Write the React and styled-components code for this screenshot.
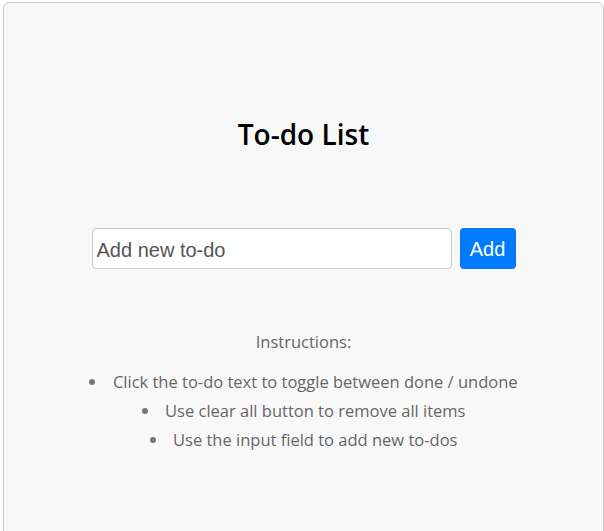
import styled, { createGlobalStyle } from "styled-components";

const GlobalStyle = createGlobalStyle`
  body {
    margin: 0;
    background: #fff;
    font-family: "Open Sans", sans-serif;
  }
`;

const Card = styled.div`
  box-sizing: border-box;
  margin: 2px 0 0 3px;
  width: 601px;
  min-height: 600px;
  padding-top: 112px;
  background-color: #f8f8f8;
  border: 1px solid #cccccc;
  border-radius: 6px;
  text-align: center;
`;

const Title = styled.h1`
  margin: 0;
  font-size: 28px;
  line-height: 38px;
  font-weight: 550;
  color: #000;
`;

const AddRow = styled.form`
  display: flex;
  justify-content: center;
  gap: 8px;
  margin-top: 75px;
`;

const TodoInput = styled.input`
  box-sizing: border-box;
  width: 360px;
  height: 41px;
  padding: 3px 4px 0;
  border: 1px solid #cccccc;
  border-radius: 4px;
  background: #fff;
  font-family: "Liberation Sans", Arial, sans-serif;
  font-size: 20px;
  color: #333;
  outline: none;

  &::placeholder {
    color: #555;
  }
`;

const AddBtn = styled.button`
  box-sizing: border-box;
  width: 56px;
  height: 41px;
  padding: 2px 0 0;
  border: none;
  border-radius: 4px;
  background-color: #007bff;
  color: #fff;
  font-family: "Liberation Sans", Arial, sans-serif;
  font-size: 20px;
  cursor: pointer;
`;

const Instructions = styled.div`
  margin-top: 62px;
  color: #666;
  font-size: 16.5px;
`;

const InstructionsHead = styled.p`
  margin: 0;
  line-height: 22px;
`;

const Steps = styled.ul`
  margin: 14px 0 0;
  padding: 0;
  list-style-position: inside;
`;

const Step = styled.li`
  line-height: 29px;

  &::marker {
    color: #777;
  }
`;

const App = () => {
  return (
    <>
      <GlobalStyle />
      <Card>
        <Title>To-do List</Title>
        <AddRow onSubmit={(e) => e.preventDefault()}>
          <TodoInput placeholder="Add new to-do" />
          <AddBtn type="submit">Add</AddBtn>
        </AddRow>
        <Instructions>
          <InstructionsHead>Instructions:</InstructionsHead>
          <Steps>
            <Step>Click the to-do text to toggle between done / undone</Step>
            <Step>Use clear all button to remove all items</Step>
            <Step>Use the input field to add new to-dos</Step>
          </Steps>
        </Instructions>
      </Card>
    </>
  );
};

export default App;
